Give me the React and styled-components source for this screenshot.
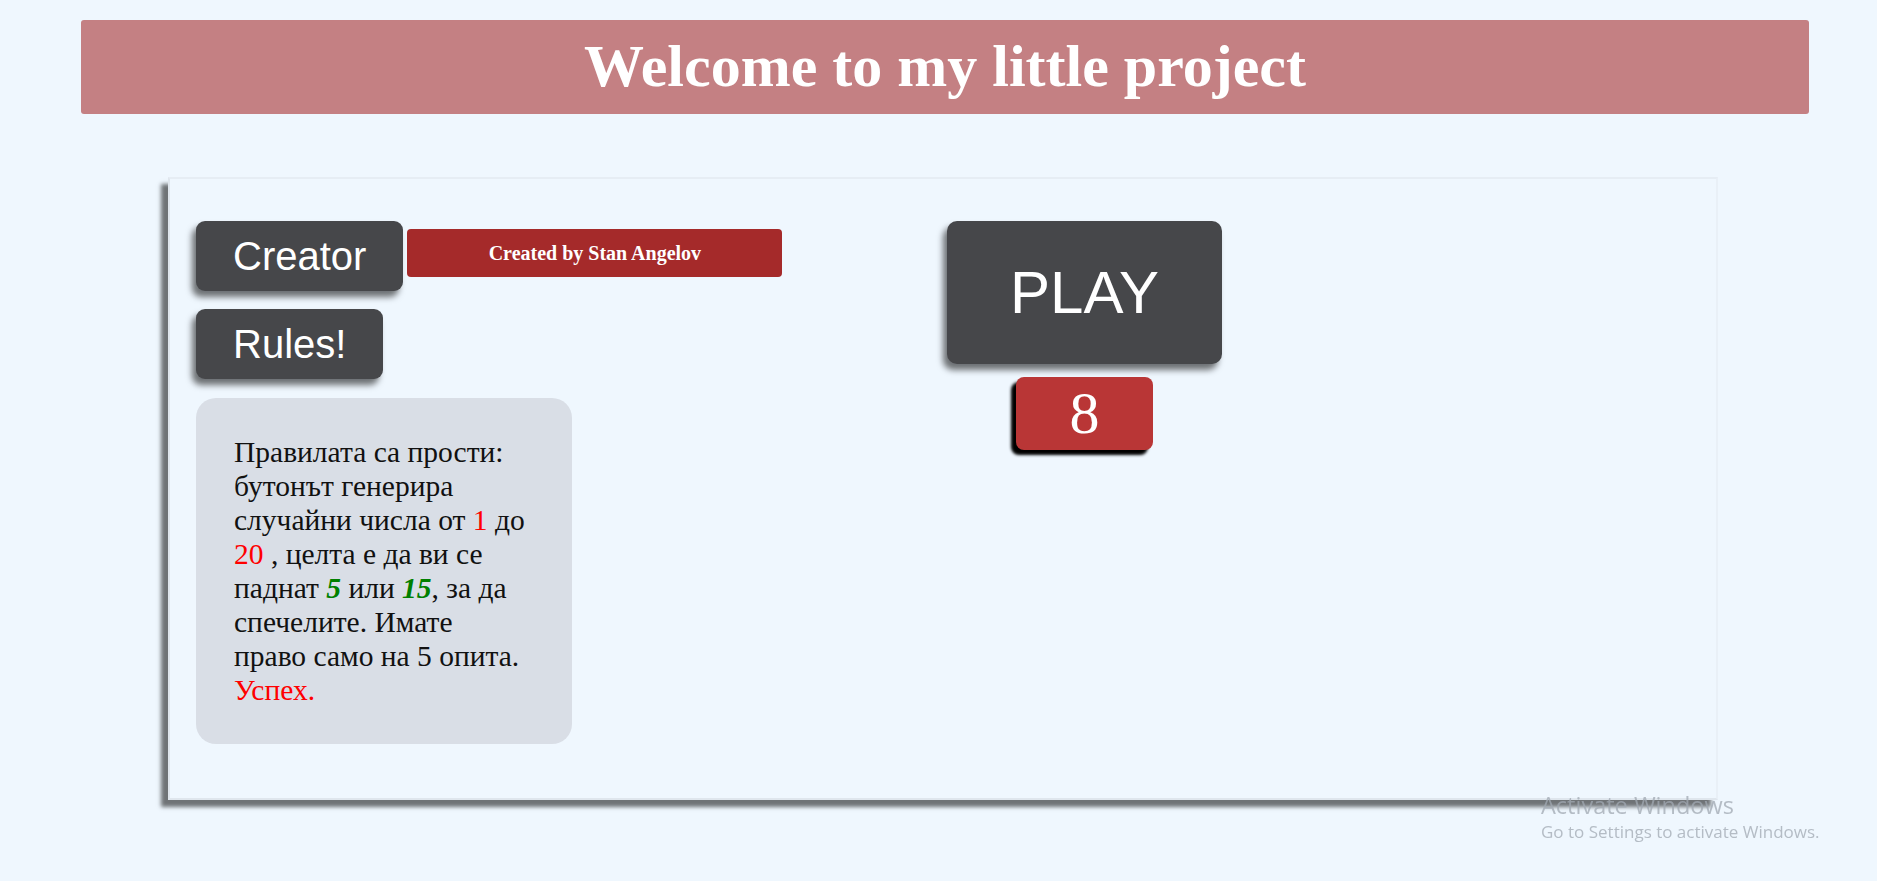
import React from 'react'
import styled, { createGlobalStyle } from 'styled-components'

const GlobalStyle = createGlobalStyle`
  html, body {
    margin: 0;
    padding: 0;
    background: #eff7fe;
  }
  body {
    font-family: "Liberation Serif", "Times New Roman", serif;
  }
`

const Page = styled.div({
  minHeight: '881px',
  paddingTop: '20px',
  boxSizing: 'border-box',
})

const Header = styled.h1({
  margin: '0 68px 0 81px',
  padding: '12px 0 13px',
  backgroundColor: '#c48083',
  borderRadius: '3px',
  color: 'white',
  textAlign: 'center',
  fontFamily: '"Liberation Serif", "Times New Roman", serif',
  fontWeight: 'bold',
  fontSize: '60px',
  lineHeight: '69px',
})

const Panel = styled.div({
  margin: '63px 159px 0 168px',
  height: '623px',
  boxSizing: 'border-box',
  padding: '42px 0 0 26px',
  border: '2px solid #dfe6ed',
  borderTopColor: '#e6edf4',
  borderRightColor: '#e9f0f7',
  boxShadow: '-7px 7px 4px #6f7376',
  display: 'grid',
  gridTemplateColumns: '751px max-content',
  alignItems: 'start',
})

const LeftColumn = styled.div({
  display: 'flex',
  flexDirection: 'column',
  alignItems: 'flex-start',
})

const CreatorRow = styled.div({
  display: 'flex',
  alignItems: 'flex-start',
  gap: '4px',
})

const DarkButton = styled.button(({ big }) => ({
  backgroundColor: '#46474a',
  color: 'white',
  border: 'none',
  borderRadius: big ? '10px' : '9px',
  fontFamily: '"Liberation Sans", Arial, sans-serif',
  fontSize: big ? '60px' : '40px',
  lineHeight: big ? '69px' : '46px',
  padding: big ? '37px 63px' : '12px 37px',
  boxShadow: '-4px 6px 6px rgba(0, 0, 0, 0.55)',
  cursor: 'pointer',
}))

const CreditBadge = styled.div({
  marginTop: '8px',
  width: '375px',
  height: '48px',
  boxSizing: 'border-box',
  display: 'flex',
  alignItems: 'center',
  justifyContent: 'center',
  backgroundColor: '#a52a2a',
  borderRadius: '4px',
  color: 'white',
  fontWeight: 'bold',
  fontSize: '20px',
})

const RulesButtonWrap = styled.div({
  marginTop: '18px',
})

const RulesBox = styled.div({
  marginTop: '19px',
  width: '300px',
  padding: '37px 38px',
  backgroundColor: '#d9dee6',
  borderRadius: '20px',
  color: '#111',
  fontSize: '29.5px',
  lineHeight: '34px',
})

const Red = styled.span({
  color: '#ff0000',
})

const Win = styled.b({
  color: '#008000',
  fontStyle: 'italic',
})

const RightColumn = styled.div({
  display: 'flex',
  flexDirection: 'column',
  alignItems: 'center',
  gap: '13px',
})

const Counter = styled.div({
  width: '137px',
  height: '73px',
  display: 'flex',
  alignItems: 'center',
  justifyContent: 'center',
  backgroundColor: '#b93636',
  borderRadius: '8px',
  color: 'white',
  fontSize: '60px',
  boxShadow: '-5px 5px 3px #000',
})

const Watermark = styled.div({
  position: 'fixed',
  left: '1541px',
  top: '790px',
  fontFamily: '"Open Sans", "Noto Sans", sans-serif',
  color: 'rgba(160, 168, 178, 0.75)',
  pointerEvents: 'none',
})

const WatermarkTitle = styled.div({
  fontSize: '23.5px',
  lineHeight: '30px',
})

const WatermarkText = styled.div({
  fontSize: '17px',
  lineHeight: '24px',
})

export default function App() {
  return (
    <>
      <GlobalStyle />
      <Page>
        <Header>Welcome to my little project</Header>
        <Panel>
          <LeftColumn>
            <CreatorRow>
              <DarkButton>Creator</DarkButton>
              <CreditBadge>Created by Stan Angelov</CreditBadge>
            </CreatorRow>
            <RulesButtonWrap>
              <DarkButton>Rules!</DarkButton>
            </RulesButtonWrap>
            <RulesBox>
              Правилата са прости: бутонът генерира случайни числа от{' '}
              <Red>1</Red> до <Red>20</Red> , целта е да ви се паднат{' '}
              <Win>5</Win> или <Win>15</Win>, за да спечелите. Имате
              <br />
              право само на 5 опита. <Red>Успех.</Red>
            </RulesBox>
          </LeftColumn>
          <RightColumn>
            <DarkButton big>PLAY</DarkButton>
            <Counter>8</Counter>
          </RightColumn>
        </Panel>
      </Page>
      <Watermark>
        <WatermarkTitle>Activate Windows</WatermarkTitle>
        <WatermarkText>Go to Settings to activate Windows.</WatermarkText>
      </Watermark>
    </>
  )
}
